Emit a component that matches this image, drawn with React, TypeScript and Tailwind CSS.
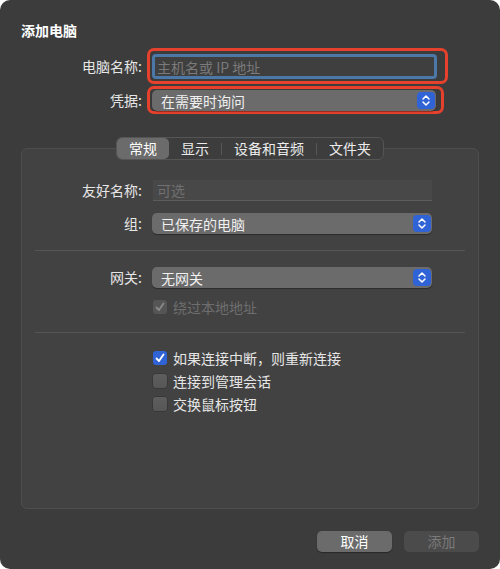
import React from "react";

const font = { fontFamily: '"Noto Sans CJK SC", "Noto Sans", sans-serif' };

function Stepper() {
  return (
    <div className="w-[18px] h-[17px] rounded-[4px] bg-[#2f63d6] flex items-center justify-center shrink-0">
      <svg width="18" height="17" viewBox="0 0 18 17">
        <path d="M6 7 L9 4 L12 7" fill="none" stroke="#fff" strokeWidth="1.5" strokeLinecap="round" strokeLinejoin="round" />
        <path d="M6 10 L9 13 L12 10" fill="none" stroke="#fff" strokeWidth="1.5" strokeLinecap="round" strokeLinejoin="round" />
      </svg>
    </div>
  );
}

function Popup({ text, width }: { text: string; width: string }) {
  return (
    <div className={`${width} h-[21px] rounded-[5px] bg-[#6b6b6b] shadow-[0_1px_1px_rgba(0,0,0,0.35)] flex items-center justify-between pl-[9px] pr-[1px]`}>
      <span className="text-[14px] leading-none text-[#f0f0f0]">{text}</span>
      <Stepper />
    </div>
  );
}

function Check({ checked, disabled }: { checked?: boolean; disabled?: boolean }) {
  if (checked && disabled) {
    return (
      <div className="w-[14px] h-[14px] rounded-[3px] bg-[#555555] flex items-center justify-center">
        <svg width="12" height="12" viewBox="0 0 12 12">
          <path d="M2.5 6.5 L5 9 L9.5 2.5" fill="none" stroke="#8a8a8a" strokeWidth="1.8" strokeLinecap="round" strokeLinejoin="round" />
        </svg>
      </div>
    );
  }
  if (checked) {
    return (
      <div className="w-[14px] h-[14px] rounded-[3px] bg-[#2f63d6] flex items-center justify-center">
        <svg width="12" height="12" viewBox="0 0 12 12">
          <path d="M2.5 6.5 L5 9 L9.5 2.5" fill="none" stroke="#fff" strokeWidth="1.8" strokeLinecap="round" strokeLinejoin="round" />
        </svg>
      </div>
    );
  }
  return <div className="w-[14px] h-[14px] rounded-[3px] bg-gradient-to-b from-[#5e5e5e] to-[#565656] shadow-[0_0_0_0.5px_rgba(0,0,0,0.3)]" />;
}

export default function App() {
  return (
    <div className="w-[500px] h-[569px] bg-white" style={font}>
      <div className="w-full h-full rounded-[10px] bg-[#3c3c3c] flex flex-col px-[21px]">
        <div className="pt-[21px] h-[39px] text-[14px] leading-[18px] font-bold text-white">添加电脑</div>

        <div className="flex items-center mt-[9px]">
          <div className="w-[121px] text-right text-[14px] text-[#e6e6e6]">电脑名称:</div>
          <div className="ml-[5px] w-[301px] h-[36px] border-[3px] border-[#e5412d] rounded-[7px] pl-[2px] pt-[3px]">
            <div className="w-[285px] h-[25px] border-[3px] border-[#4c78a8] rounded-[4px] bg-[#3f3f3f] flex items-center pl-[2px]">
              <span className="text-[14px] leading-none text-[#7a7a7a]">主机名或 IP 地址</span>
            </div>
          </div>
        </div>

        <div className="flex items-center mt-[2px]">
          <div className="w-[121px] text-right text-[14px] text-[#e6e6e6]">凭据:</div>
          <div className="ml-[5px] w-[297px] h-[28px] border-[3px] border-[#e5412d] rounded-[7px] pl-[2px] pt-[1px]">
            <Popup text="在需要时询问" width="w-[284px]" />
          </div>
        </div>

        <div className="mt-[23px] flex flex-col">
          <div className="relative z-10 flex justify-center">
            <div className="h-[23px] flex items-center rounded-[6px] bg-[#3d3d3d] border border-[#555555] text-[14px] text-[#ececec]">
              <div className="h-[21px] px-[12px] flex items-center rounded-[5px] bg-[#6b6b6b] text-white">常规</div>
              <div className="h-[21px] px-[12px] flex items-center">显示</div>
              <div className="w-px h-[12px] bg-[#575757]" />
              <div className="h-[21px] px-[12px] flex items-center">设备和音频</div>
              <div className="w-px h-[12px] bg-[#575757]" />
              <div className="h-[21px] px-[12px] flex items-center">文件夹</div>
            </div>
          </div>

          <div className="mt-[-12px] h-[361px] rounded-[6px] bg-[#424242] border border-[#4e4e4e] flex flex-col pt-[31px] text-[14px]">
            <div className="flex items-center">
              <div className="w-[120px] text-right text-[#e6e6e6]">友好名称:</div>
              <div className="ml-[11px] w-[279px] h-[21px] bg-[#484848] border-b border-[#5c5c5c] flex items-center pl-[4px]">
                <span className="leading-none text-[#707070]">可选</span>
              </div>
            </div>

            <div className="flex items-center mt-[12px]">
              <div className="w-[120px] text-right text-[#e6e6e6]">组:</div>
              <div className="ml-[10px]">
                <Popup text="已保存的电脑" width="w-[280px]" />
              </div>
            </div>

            <div className="mt-[16px] mx-[13px] h-px bg-[#555555]" />

            <div className="flex items-center mt-[16px]">
              <div className="w-[120px] text-right text-[#e6e6e6]">网关:</div>
              <div className="ml-[10px]">
                <Popup text="无网关" width="w-[280px]" />
              </div>
            </div>

            <div className="flex items-center mt-[12px] ml-[131px] h-[14px]">
              <Check checked disabled />
              <span className="ml-[6px] text-[#6e6e6e]">绕过本地地址</span>
            </div>

            <div className="mt-[18px] mx-[13px] h-px bg-[#555555]" />

            <div className="flex items-center mt-[18px] ml-[131px] h-[14px]">
              <Check checked />
              <span className="ml-[6px] text-[#e6e6e6]">如果连接中断，则重新连接</span>
            </div>
            <div className="flex items-center mt-[9px] ml-[131px] h-[14px]">
              <Check />
              <span className="ml-[6px] text-[#e6e6e6]">连接到管理会话</span>
            </div>
            <div className="flex items-center mt-[9px] ml-[131px] h-[14px]">
              <Check />
              <span className="ml-[6px] text-[#e6e6e6]">交换鼠标按钮</span>
            </div>
          </div>
        </div>

        <div className="mt-[22px] flex justify-end gap-[12px]">
          <div className="w-[75px] h-[21px] rounded-[5px] bg-[#6b6b6b] shadow-[0_1px_1px_rgba(0,0,0,0.35)] flex items-center justify-center text-[14px] text-white">取消</div>
          <div className="w-[75px] h-[21px] rounded-[5px] bg-[#4b4b4b] flex items-center justify-center text-[14px] text-[#7a7a7a]">添加</div>
        </div>
      </div>
    </div>
  );
}
